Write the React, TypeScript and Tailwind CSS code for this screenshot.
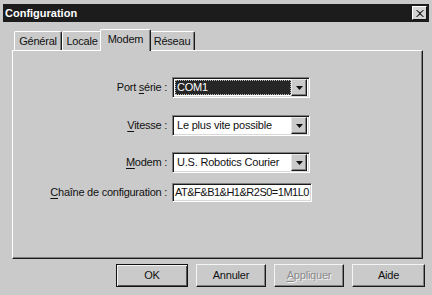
import React from "react";

const FONT = { fontFamily: "'Liberation Sans', Arial, sans-serif" };

function DropButton() {
  return (
    <div className="w-[16px] h-[17px] bg-[#cacaca] border-t border-l border-t-[#e8e8e8] border-l-[#e8e8e8] border-r border-b border-r-[#1a1a1a] border-b-[#1a1a1a] shadow-[inset_-1px_-1px_0_#808080] flex items-center justify-center">
      <svg width="7" height="4" viewBox="0 0 7 4">
        <path d="M0 0h7L3.5 4z" fill="#111" />
      </svg>
    </div>
  );
}

function Combo({ value, selected }: { value: string; selected?: boolean }) {
  return (
    <div className="h-[21px] w-[138px] bg-white border border-t-[#808080] border-l-[#808080] border-b-white border-r-white shadow-[inset_1px_1px_0_#1a1a1a,inset_-1px_-1px_0_#d8d8d8] flex items-center pl-[2px] pr-[2px]">
      <div
        className={
          "flex-1 h-[15px] flex items-center pl-[2px] text-[11px] tracking-[-0.2px] leading-none " +
          (selected ? "bg-[#262626] text-white outline-1 outline-dotted outline-[#bbbbbb] -outline-offset-1" : "text-[#111]")
        }
      >
        {value}
      </div>
      <DropButton />
    </div>
  );
}

function Label({ pre, acc, post }: { pre?: string; acc: string; post: string }) {
  return (
    <div className="text-right text-[11px] tracking-[-0.25px] text-[#111] leading-none pr-[1px]">
      {pre}
      <span className="underline underline-offset-2">{acc}</span>
      {post}
    </div>
  );
}

function Button({ children, w, def, disabled }: { children: React.ReactNode; w: string; def?: boolean; disabled?: boolean }) {
  return (
    <div
      className={
        w +
        " h-[23px] flex items-center justify-center text-[11px] tracking-[-0.2px] " +
        (def
          ? "border border-[#111] shadow-[inset_1px_1px_0_#f4f4f4,inset_-1px_-1px_0_#555]"
          : "border-t border-l border-t-[#f4f4f4] border-l-[#f4f4f4] border-r border-b border-r-[#1a1a1a] border-b-[#1a1a1a] shadow-[inset_-1px_-1px_0_#808080]") +
        (disabled ? " text-[#8a8a8a] [text-shadow:1px_1px_0_#f4f4f4]" : " text-[#111]")
      }
    >
      {children}
    </div>
  );
}

const tabs = [
  { t: "Général", w: "w-[48px]" },
  { t: "Locale", w: "w-[40px]" },
  { t: "Modem", w: "w-[51px]" },
  { t: "Réseau", w: "w-[46px]" },
];

export default function App() {
  return (
    <div className="w-[432px] h-[295px] bg-[#cacaca] overflow-hidden flex flex-col" style={FONT}>
      {/* Title bar */}
      <div className="mx-[3px] mt-[4px] h-[18px] bg-[#1c1c1c] flex items-center justify-between pl-[2px] pr-[2px]">
        <span className="text-white font-bold text-[11px] leading-none">Configuration</span>
        <div className="w-[15px] h-[14px] bg-[#d4d4d4] border-t border-l border-white border-r border-b border-r-[#111] border-b-[#111] flex items-center justify-center">
          <svg width="8" height="7" viewBox="0 0 8 7">
            <path d="M1 0l3 2.5L7 0h1L4.6 3.5 8 7H7L4 4.5 1 7H0l3.4-3.5L0 0z" fill="#111" />
          </svg>
        </div>
      </div>

      {/* Tabs */}
      <div className="h-[28px] flex items-end pl-[14px]">
        {tabs.map(({ t, w }) => {
          const active = t === "Modem";
          return (
            <div
              key={t}
              className={
                w +
                " flex items-center justify-center text-[11px] tracking-[-0.2px] text-[#111] leading-none rounded-t-[2px] border-t border-l border-t-white border-l-white border-r border-r-[#1a1a1a] shadow-[inset_-1px_0_0_#808080] " +
                (active ? "h-[22px] -mb-px z-10 bg-[#cacaca] -mx-[2px] pb-[3px]" : "h-[19px] pt-[1px]")
              }
            >
              {t}
            </div>
          );
        })}
      </div>

      {/* Panel */}
      <div className="ml-[12px] mr-[9px] h-[209px] border-l border-t border-white border-r border-b border-r-[#1a1a1a] border-b-[#1a1a1a] shadow-[inset_-1px_-1px_0_#808080] pt-[26px]">
        <div className="grid grid-cols-[155px_140px] gap-x-[4px] items-center">
          <Label pre="Port " acc="s" post="érie :" />
          <Combo value="COM1" selected />
          <div className="col-span-2 h-[17px]" />
          <Label acc="V" post="itesse :" />
          <Combo value="Le plus vite possible" />
          <div className="col-span-2 h-[16px]" />
          <Label acc="M" post="odem :" />
          <Combo value="U.S. Robotics Courier" />
          <div className="col-span-2 h-[10px]" />
          <Label acc="C" post="haîne de configuration :" />
          <div className="h-[19px] w-[140px] bg-white border border-t-[#808080] border-l-[#808080] border-b-white border-r-white shadow-[inset_1px_1px_0_#1a1a1a,inset_-1px_-1px_0_#d8d8d8] flex items-center pl-[2px] text-[11px] tracking-[-0.5px] text-[#111] leading-none whitespace-nowrap overflow-hidden">
            AT&amp;F&amp;B1&amp;H1&amp;R2S0=1M1L0
          </div>
        </div>
      </div>

      {/* Buttons */}
      <div className="mt-[5px] flex justify-end gap-[8px] pr-[7px]">
        <Button w="w-[72px]" def>
          OK
        </Button>
        <Button w="w-[70px]">Annuler</Button>
        <Button w="w-[70px]" disabled>
          <span className="underline underline-offset-2">A</span>ppliquer
        </Button>
        <Button w="w-[73px]">Aide</Button>
      </div>
    </div>
  );
}
